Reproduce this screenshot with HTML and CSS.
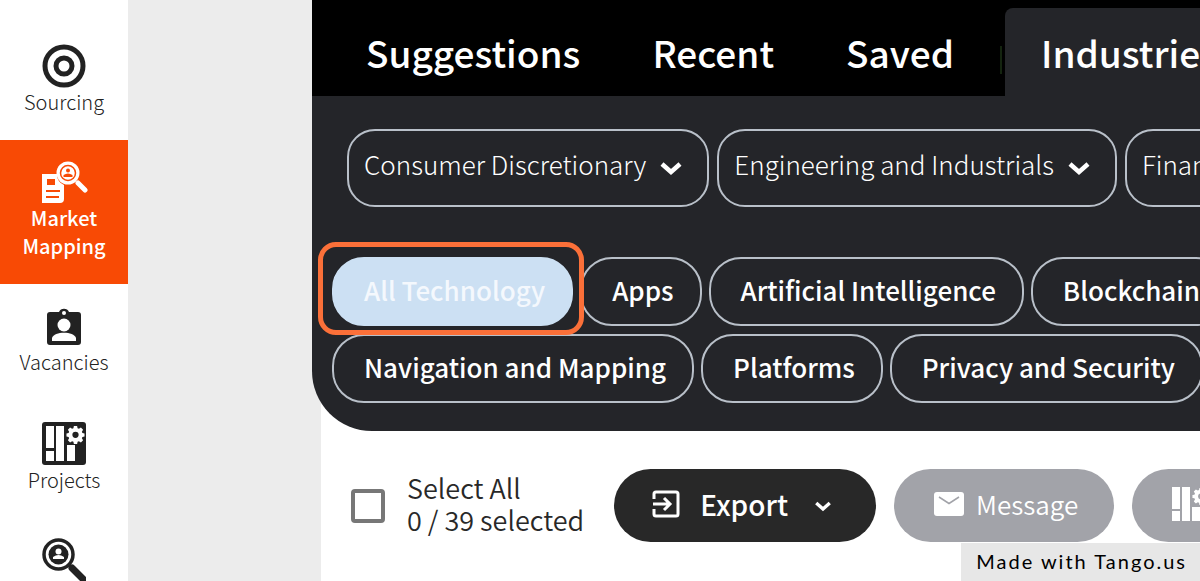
FILE: index.html
```
<!DOCTYPE html>
<html lang="en">
  <head>
    <meta charset="utf-8">
    <title>Market Mapping</title>
    <link rel="stylesheet" href="styles.css">
    <meta name="viewport" content="width=device-width, initial-scale=1" />
  </head>
  <body>
    <svg class="defs" aria-hidden="true">
      <symbol id="chevron" viewBox="0 0 24 16">
        <path d="M3 4l9 8 9-8" fill="none" stroke="currentColor" stroke-width="4.5" />
      </symbol>
      <symbol id="gear" viewBox="0 0 20 20">
        <path d="M8.3 1h3.4l.5 2.4 1.4.6 2.1-1.3 2.3 2.3-1.3 2.1.6 1.4 2.2.4v3.2l-2.2.5-.6 1.4 1.3 2-2.3 2.4-2.1-1.4-1.4.6-.5 2.4H8.3l-.5-2.4-1.4-.6L4.3 18.4 2 16l1.3-2-.6-1.4L.5 12.1V8.9l2.2-.4.6-1.4L2 5l2.3-2.3L6.4 4l1.4-.6z M10 7a3.3 3.3 0 1 0 0 6.6A3.3 3.3 0 0 0 10 7z" fill="currentColor" fill-rule="evenodd" />
      </symbol>
    </svg>
    <div class="app">
      <nav class="sidebar">
        <a href="#" class="item">
          <svg class="icon" viewBox="0 0 44 44">
            <circle cx="22" cy="22" r="19" fill="none" stroke="currentColor" stroke-width="5" />
            <circle cx="22" cy="22" r="8" fill="none" stroke="currentColor" stroke-width="5" />
          </svg>
          <span>Sourcing</span>
        </a>
        <a href="#" class="item active">
          <svg class="icon wide" viewBox="0 0 48 44">
            <path d="M2 14h15a12 12 0 0 0 7 11v14q0 4-4 4H2z" fill="currentColor" />
            <path d="M7 19h8v6H7zM6 30h14v2H6zM6 36h13v2H6z" fill="#f84a05" />
            <circle cx="28" cy="13" r="11.5" fill="currentColor" />
            <circle cx="28" cy="13" r="7.5" fill="none" stroke="#f84a05" stroke-width="1.5" />
            <circle cx="28" cy="10.5" r="2" fill="#f84a05" />
            <path d="M23.5 17v-2q4.5-3 9 0v2z" fill="#f84a05" />
            <path d="M38 23l7 7" stroke="currentColor" stroke-width="5" stroke-linecap="round" />
          </svg>
          <span>Market<br>Mapping</span>
        </a>
        <a href="#" class="item">
          <svg class="icon" viewBox="0 0 44 44">
            <path d="M8 8h9a5.5 5.5 0 0 1 10 0h9q3 0 3 3v27q0 3-3 3H8q-3 0-3-3V11q0-3 3-3z" fill="currentColor" />
            <circle cx="22" cy="9" r="2" fill="#fff" />
            <circle cx="22" cy="21" r="6.5" fill="#fff" />
            <path d="M10 37v-3c2-7 22-7 24 0v3z" fill="#fff" />
          </svg>
          <span>Vacancies</span>
        </a>
        <a href="#" class="item">
          <svg class="icon large" viewBox="0 0 46 46">
            <rect x="1" y="2" width="44" height="43" rx="3" fill="currentColor" />
            <path d="M5 6h8v22H5zM5 31h8v10H5zM15 6h8v35h-8zM26 25h8v16h-8z" fill="#fff" />
            <use href="#gear" x="25" y="5" width="19" height="19" color="#fff" />
          </svg>
          <span>Projects</span>
        </a>
        <a href="#" class="item" aria-label="Search candidates">
          <svg class="icon" viewBox="0 0 44 44">
            <circle cx="16.5" cy="16.5" r="14.5" fill="none" stroke="currentColor" stroke-width="3.5" />
            <circle cx="16.5" cy="16.5" r="10" fill="currentColor" />
            <circle cx="16.5" cy="13.5" r="3" fill="#fff" />
            <path d="M11 21v-2q5.5-4 11 0v2z" fill="#fff" />
            <path d="M30 30l14 14" stroke="currentColor" stroke-width="7" stroke-linecap="round" />
          </svg>
        </a>
      </nav>
      <main class="content">
        <section class="panel">
          <div class="tabs">
            <button class="tab">Suggestions</button>
            <button class="tab">Recent</button>
            <button class="tab">Saved</button>
            <span class="divider"></span>
            <button class="tab selected">Industries</button>
          </div>
          <div class="categories">
            <button class="category">Consumer Discretionary <svg class="arrow"><use href="#chevron" /></svg></button>
            <button class="category">Engineering and Industrials <svg class="arrow"><use href="#chevron" /></svg></button>
            <button class="category">Financials <svg class="arrow"><use href="#chevron" /></svg></button>
          </div>
          <div class="chips">
            <div class="row">
              <button class="chip on">All Technology</button>
              <button class="chip">Apps</button>
              <button class="chip">Artificial Intelligence</button>
              <button class="chip">Blockchain</button>
            </div>
            <div class="row">
              <button class="chip">Navigation and Mapping</button>
              <button class="chip">Platforms</button>
              <button class="chip">Privacy and Security</button>
            </div>
          </div>
        </section>
        <div class="toolbar">
          <input type="checkbox" id="all" class="check" />
          <label for="all" class="select">Select All<br>0 / 39 selected</label>
          <button class="action">
            <svg class="small" viewBox="0 0 28 28">
              <path d="M2 9V4q0-2 2-2h20q2 0 2 2v20q0 2-2 2H4q-2 0-2-2v-5M1 14h17M12 8l6 6-6 6" fill="none" stroke="currentColor" stroke-width="3" />
            </svg>
            Export
            <svg class="down"><use href="#chevron" /></svg>
          </button>
          <button class="action disabled" disabled>
            <svg class="mail" viewBox="0 0 30 24">
              <rect width="30" height="24" rx="3" fill="currentColor" />
              <path d="M5 5l10 6.5L25 5" fill="none" stroke="#a2a3a9" stroke-width="1.5" />
            </svg>
            Message
          </button>
          <button class="action disabled" disabled>
            <svg class="board" viewBox="0 0 40 36">
              <path d="M0 1h8v22H0zM0 25h8v10H0zM10 1h8v34h-8zM20 21h8v14h-8z" fill="currentColor" />
              <use href="#gear" x="20" y="1" width="18" height="18" />
            </svg>
            Project
          </button>
        </div>
      </main>
    </div>
    <div class="badge">Made with Tango.us</div>
  </body>
</html>
```
FILE: styles.css
```
* {box-sizing: border-box;}
body {margin: 0; height: 100vh; overflow: hidden; background-color: #ececec; font-family: "Noto Sans CJK SC", "Noto Sans", sans-serif; color: #282828;}
button {margin: 0; flex-shrink: 0; border: 0; background: none; color: white; font-family: inherit; white-space: nowrap;}
.defs {display: none;}
.app {display: flex; height: 100%;}

.sidebar {width: 128px; flex-shrink: 0; background-color: white; overflow: hidden;}
.item {display: flex; flex-direction: column; align-items: center; padding: 20px 0 24px; color: #222; font-size: 20px; line-height: 28px; font-weight: 300; text-align: center; text-decoration: none;}
.item:first-child {padding-top: 44px;}
.item.active {height: 144px; background-color: #f84a05; color: white; font-weight: 500;}
.icon {width: 44px; height: 44px; flex-shrink: 0;}
.icon.wide {width: 48px;}
.icon.large {width: 46px; height: 46px;}

.content {flex: 1; min-width: 0; margin-left: 193px; background-color: white;}
.panel {margin-left: -9px; padding-bottom: 28px; overflow: hidden; background-color: #242529; border-bottom-left-radius: 60px;}
.tabs {display: flex; height: 96px; padding: 8px 0 0 18px; background-color: black;}
.tab {padding: 0 36px; font-size: 37px; line-height: 88px; font-weight: 500;}
.tab.selected {background-color: #242529; border-radius: 8px 8px 0 0;}
.divider {width: 2px; height: 28px; margin: 38px 3px 0 10px; flex-shrink: 0; background-color: #14240f;}
.categories {display: flex; gap: 8px; padding: 33px 0 0 35px;}
.category {display: flex; align-items: center; gap: 13px; height: 78px; padding: 0 24px 10px 15px; border: 2px solid #b9c0c9; border-radius: 28px; font-size: 26px; font-weight: 300;}
.arrow {width: 24px; height: 16px; margin-top: 10px;}
.chips {display: flex; flex-direction: column; gap: 8px; padding: 50px 0 0 20px;}
.row {display: flex; gap: 7px;}
.chip {height: 69px; padding: 0 26px 4px 30px; border: 2px solid #b9c0c9; border-radius: 32px; font-size: 26px; font-weight: 500;}
.chip.on {position: relative; background-color: #cce0f3; border-color: #cce0f3; color: #f4f8fd;}
.chip.on::after {content: ""; position: absolute; top: -17px; right: -13px; bottom: -11px; left: -16px; border: 5px solid #fb7039; border-radius: 18px;}

.toolbar {display: flex; align-items: center; gap: 18px; padding: 38px 0 0 30px; overflow: hidden;}
.check {appearance: none; flex-shrink: 0; width: 34px; height: 34px; margin: 0 4px 0 0; border: 4px solid #777; border-radius: 4px;}
.select {flex-shrink: 0; margin-right: 12px; padding-bottom: 4px; font-size: 27px; line-height: 32px; font-weight: 350;}
.action {display: flex; align-items: center; gap: 20px; height: 73px; padding: 0 44px 4px 38px; border-radius: 37px; background-color: #282828; font-size: 28px; font-weight: 500;}
.small {width: 28px; height: 28px;}
.down {width: 18px; height: 12px; margin: 4px 0 0 6px;}
.action.disabled {gap: 12px; padding: 0 36px 4px 40px; background-color: #a2a3a9; font-size: 26px; font-weight: 350;}
.mail {width: 30px; height: 24px;}
.board {width: 40px; height: 36px;}
.badge {position: absolute; right: 0; bottom: 0; padding: 4px 13px 6px 15px; background-color: #e7e7e7; color: black; font-family: Lato, sans-serif; font-size: 20px; line-height: 28px; letter-spacing: 2px;}
```
